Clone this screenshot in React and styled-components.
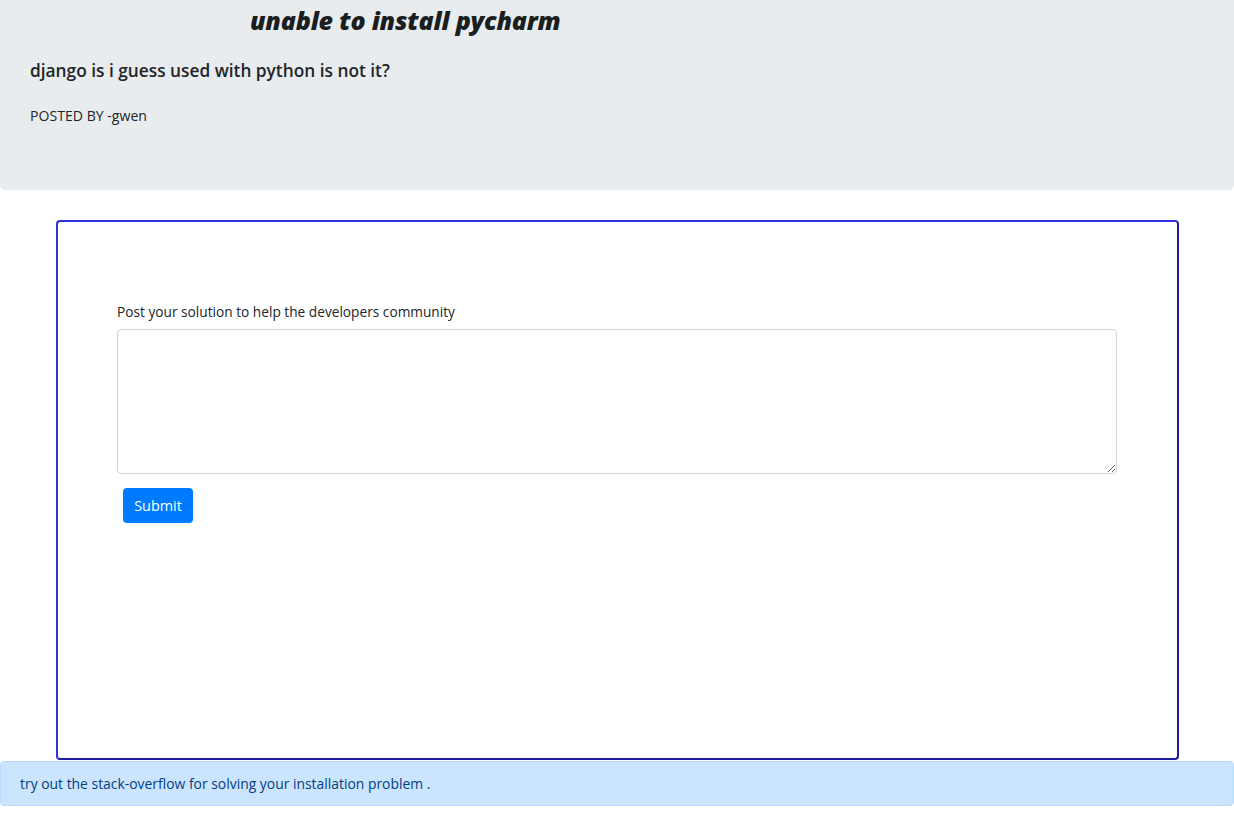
import React from "react";
import styled, { createGlobalStyle } from "styled-components";

const GlobalStyle = createGlobalStyle`
  body {
    margin: 0;
    background: #fff;
    font-family: "Open Sans", "Noto Sans", sans-serif;
    color: #212529;
  }
`;

const Jumbotron = styled.div`
  height: 190px;
  box-sizing: border-box;
  background-color: #e9ecef;
  border-radius: 0 0 5px 5px;
  padding: 0 30px;
`;

const Title = styled.h2`
  margin: 0;
  padding: 5px 0 0 220px;
  font-family: "Open Sans", sans-serif;
  font-size: 25px;
  font-weight: 800;
  font-style: italic;
  line-height: 30px;
  color: #1b1e21;
  letter-spacing: -0.2px;
`;

const Question = styled.h5`
  margin: 25px 0 0;
  font-size: 17.3px;
  font-weight: 600;
  line-height: 22px;
  color: #212529;
`;

const Author = styled.p`
  margin: 24px 0 0;
  font-size: 14.1px;
  line-height: 20px;
  color: #212529;
`;

const Card = styled.div`
  margin: 30px 55px 0 56px;
  height: 540px;
  box-sizing: border-box;
  border: 2px solid #3030dc;
  border-right-color: #1c1ca4;
  border-bottom-color: #1c1ca4;
  border-radius: 4px;
  padding: 80px 60px 0 59px;
`;

const Label = styled.label`
  display: block;
  font-size: 13.7px;
  line-height: 20px;
  margin-bottom: 7px;
  color: #212529;
`;

const TextArea = styled.textarea`
  display: block;
  width: 1000px;
  height: 145px;
  box-sizing: border-box;
  border: 1px solid #ced4da;
  border-radius: 4px;
  padding: 6px 12px;
  font-family: inherit;
  font-size: 14px;
  resize: vertical;
`;

const SubmitButton = styled.button`
  margin: 14px 0 0 6px;
  width: 70px;
  height: 35px;
  border: none;
  border-radius: 4px;
  background-color: #007bff;
  color: #fff;
  font-family: inherit;
  font-size: 14.4px;
  cursor: pointer;
`;

const Alert = styled.div`
  margin-top: 1px;
  height: 45px;
  box-sizing: border-box;
  display: flex;
  align-items: center;
  padding: 0 19px;
  background-color: #cce5ff;
  border: 1px solid #b8daff;
  border-radius: 4px;
  color: #004085;
  font-size: 13.9px;
`;

const App = () => {
  return (
    <>
      <GlobalStyle />
      <Jumbotron>
        <Title>unable to install pycharm</Title>
        <Question>django is i guess used with python is not it?</Question>
        <Author>POSTED BY -gwen</Author>
      </Jumbotron>
      <Card>
        <form onSubmit={(e) => e.preventDefault()}>
          <Label>Post your solution to help the developers community</Label>
          <TextArea />
          <SubmitButton type="submit">Submit</SubmitButton>
        </form>
      </Card>
      <Alert>try out the stack-overflow for solving your installation problem .</Alert>
    </>
  );
};

export default App;
